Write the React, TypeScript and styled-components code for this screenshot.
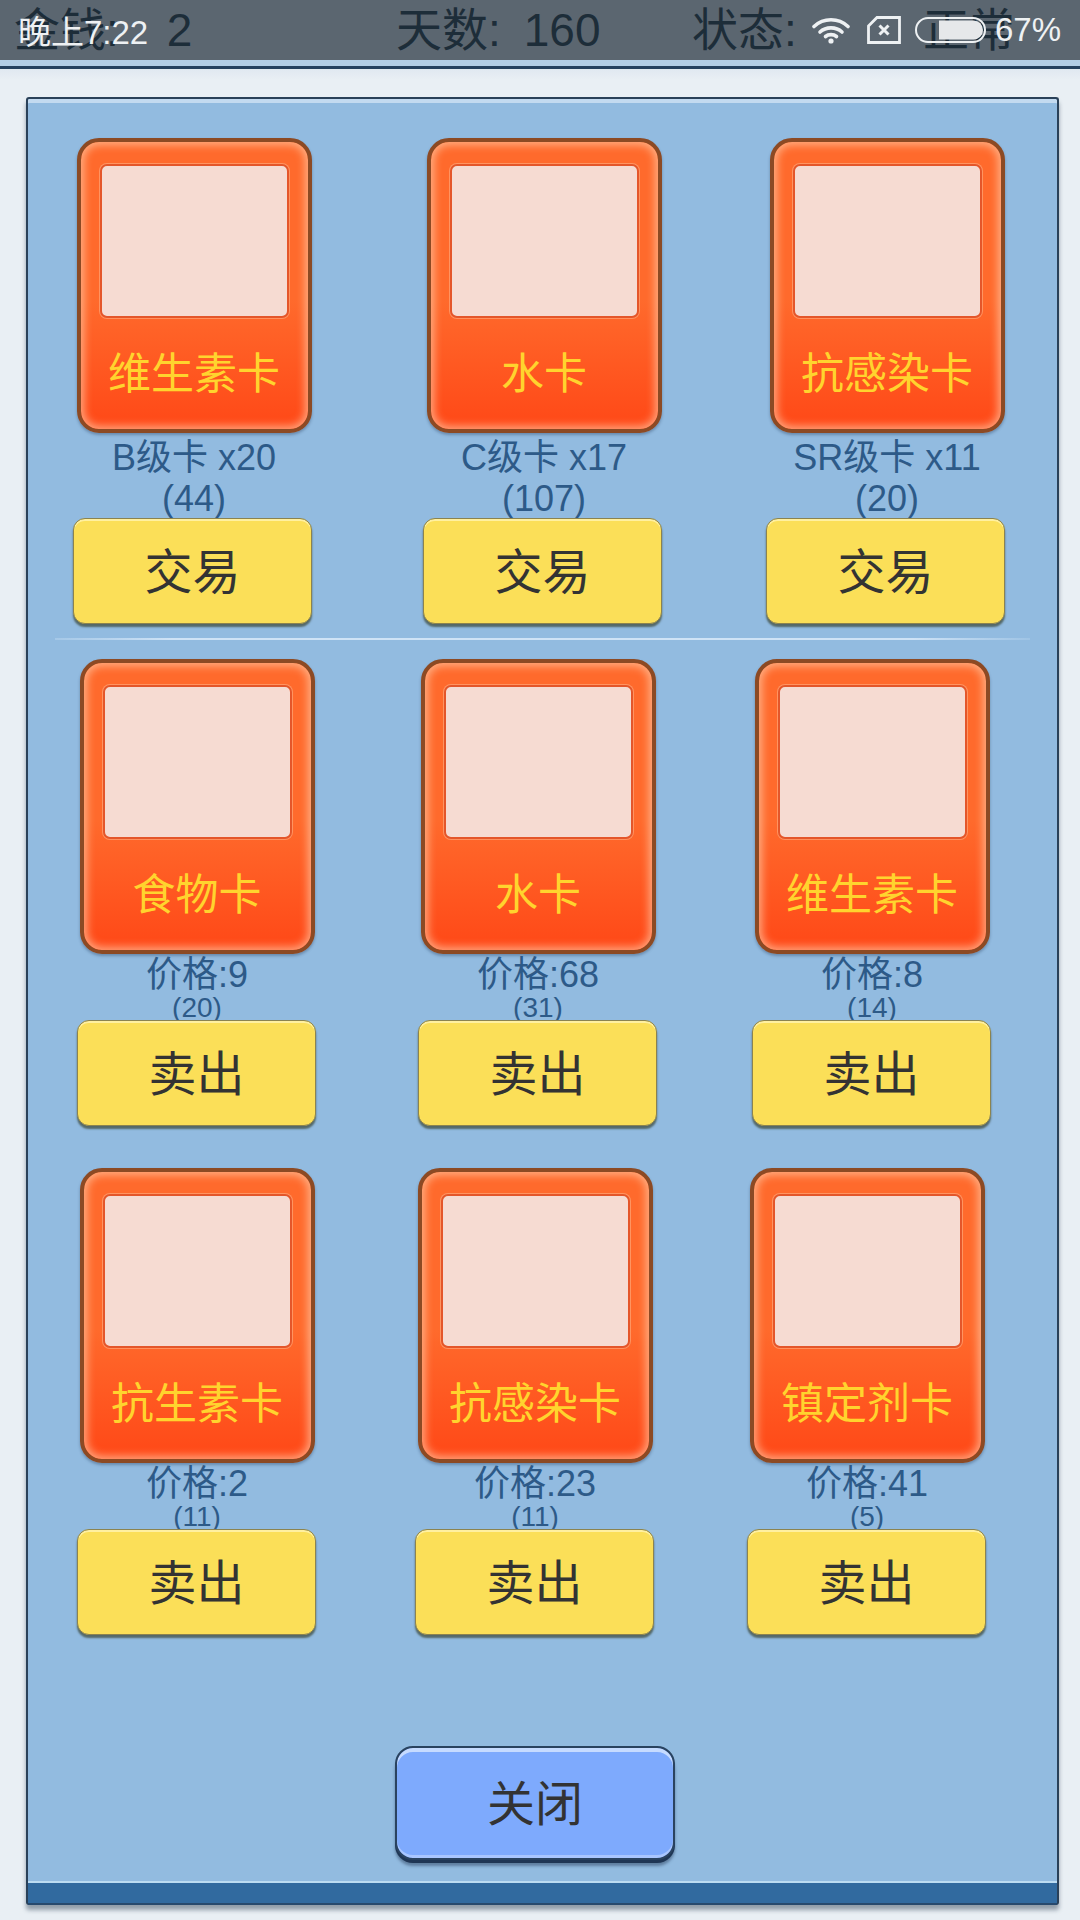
import styled, { createGlobalStyle } from "styled-components";

const GlobalStyle = createGlobalStyle`
    html, body {
        margin: 0;
        padding: 0;
        background: #e9eff4;
    }
    * {
        box-sizing: border-box;
    }
`;

const FONT = `"Liberation Sans", "Noto Sans CJK SC", sans-serif`;

const Page = styled.div`
    position: relative;
    width: 1080px;
    height: 1920px;
    overflow: hidden;
    font-family: ${FONT};
    background: #e9eff4;
`;

const Header = styled.header`
    height: 80px;
    background: linear-gradient(#a9c0dd, #e9eff4);
`;

const HeaderBar = styled.div`
    display: grid;
    grid-template-columns: 382px 296px 231px auto;
    align-items: center;
    height: 60px;
    padding-left: 14px;
    background: #5b6670;
    color: #1d2d39;
    font-size: 46px;
    line-height: 46px;
    white-space: nowrap;
    overflow: hidden;
`;

const HeaderValue = styled.span<{ $gap: number }>`
    margin-left: ${(props) => props.$gap}px;
`;

const HeaderEdge = styled.div`
    height: 9px;
    background: #b2cde6;
    border-bottom: 3px solid #24405f;
`;

const StatusBar = styled.div`
    position: absolute;
    top: 0;
    left: 18px;
    right: 19px;
    height: 60px;
    display: flex;
    align-items: center;
    color: #eef1f3;
    font-size: 33px;
`;

const StatusTime = styled.span`
    margin-right: auto;
`;

const StatusIcon = styled.svg`
    display: block;
    margin-right: ${(props: { $gap: number }) => props.$gap}px;
`;

const Panel = styled.main`
    display: flex;
    flex-direction: column;
    height: 1808px;
    margin: 17px 21px 0 26px;
    border: 2px solid #2a4159;
    border-bottom: none;
    border-radius: 3px;
    background: #92bbe0;
    box-shadow: inset 0 4px 0 #c3daf0, 0 5px 4px rgba(40, 60, 80, 0.45);
`;

const Body = styled.div`
    flex: 1;
    padding-top: 39px;
`;

const Row = styled.div<{ $left: number; $cols: string }>`
    display: grid;
    grid-template-columns: ${(props) => props.$cols};
    padding-left: ${(props) => props.$left}px;
`;

const Slot = styled.div`
    display: flex;
    flex-direction: column;
    width: 239px;
`;

const CardColumn = styled.div<{ $inset: number }>`
    display: flex;
    flex-direction: column;
    align-items: center;
    padding-left: ${(props) => props.$inset}px;
`;

const Card = styled.div`
    width: 235px;
    height: 295px;
    padding: 22px 19px 0;
    border: 4px solid #8c4a24;
    border-radius: 22px;
    background: linear-gradient(#ff6a2c 0%, #ff6a2c 55%, #ff4817 100%);
    box-shadow: inset 0 0 8px 3px rgba(255, 205, 170, 0.7), 0 2px 3px rgba(30, 50, 80, 0.35);
`;

const CardArt = styled.div`
    height: 154px;
    border: 2px solid #e4562a;
    border-radius: 7px;
    background: #f6dbd2;
    box-shadow: 0 0 0 1px rgba(255, 190, 150, 0.5);
`;

const CardName = styled.div`
    margin: 31px -10px 0;
    text-align: center;
    color: #ffd42e;
    font-size: 43px;
    line-height: 50px;
    white-space: nowrap;
`;

const Caption = styled.div`
    width: 100%;
    margin-top: 4px;
    height: 81px;
    text-align: center;
    color: #2d5a88;
    font-size: 36px;
    line-height: 41px;
    white-space: nowrap;
`;

const Price = styled.div`
    margin-top: 2px;
    text-align: center;
    color: #2d5a88;
    font-size: 36px;
    line-height: 38px;
    white-space: nowrap;
`;

const Stock = styled.div`
    text-align: center;
    color: #2d5a88;
    font-size: 28px;
    line-height: 27px;
    height: 26px;
    overflow: hidden;
`;

const ActionButton = styled.button`
    display: block;
    width: 239px;
    height: 106px;
    padding: 0 0 6px;
    border: 1px solid #8b8350;
    border-radius: 12px;
    background: #fbdf58;
    box-shadow: inset 0 2px 0 #fff0a0, 0 3px 2px rgba(50, 60, 40, 0.65);
    color: #333;
    font-family: ${FONT};
    font-size: 48px;
`;

const Divider = styled.div`
    height: 2px;
    margin: 14px 27px 19px 27px;
    background: linear-gradient(90deg, rgba(210, 230, 248, 0.3), #cfe3f6 12%, #cfe3f6 88%, rgba(210, 230, 248, 0.2));
`;

const RowSpacer = styled.div`
    height: 42px;
`;

const CloseRow = styled.div`
    display: flex;
    padding-left: 367px;
    margin-bottom: 21px;
`;

const CloseButton = styled.button`
    width: 280px;
    height: 114px;
    padding: 0 0 6px;
    border: 2px solid #2a4360;
    border-radius: 18px;
    background: #7eaafd;
    box-shadow: inset 0 4px 0 #c6dbff, inset 0 -3px 0 #a9c6ff, 0 3px 0 #1f3655, 0 6px 3px rgba(30, 50, 80, 0.45);
    color: #333;
    font-family: ${FONT};
    font-size: 48px;
`;

const FooterStrip = styled.div`
    height: 24px;
    border-top: 2px solid #bcdcf2;
    background: #316a9f;
    border-bottom: 2px solid #27496d;
`;

const tradeCards = [
    { name: "维生素卡", grade: "B级卡 x20", count: 44 },
    { name: "水卡", grade: "C级卡 x17", count: 107 },
    { name: "抗感染卡", grade: "SR级卡 x11", count: 20 },
];

const sellRows = [
    {
        left: 49,
        cols: "341px 334px 239px",
        spacer: true,
        cards: [
            { name: "食物卡", price: 9, count: 20 },
            { name: "水卡", price: 68, count: 31 },
            { name: "维生素卡", price: 8, count: 14 },
        ],
    },
    {
        left: 49,
        cols: "338px 332px 239px",
        spacer: false,
        cards: [
            { name: "抗生素卡", price: 2, count: 11 },
            { name: "抗感染卡", price: 23, count: 11 },
            { name: "镇定剂卡", price: 41, count: 5 },
        ],
    },
];

function GameCard({ name }: { name: string }) {
    return (
        <Card>
            <CardArt />
            <CardName>{name}</CardName>
        </Card>
    );
}

function WifiIcon() {
    return (
        <StatusIcon $gap={17} width="38" height="28" viewBox="0 0 38 28" fill="none" stroke="#eef1f3" strokeWidth="3.6" strokeLinecap="round">
            <path d="M2 10.5C11.5 1.5 26.5 1.5 36 10.5" />
            <path d="M8 16C14 10.5 24 10.5 30 16" />
            <path d="M13.5 20.5C16.5 18 21.5 18 24.5 20.5" />
            <circle cx="19" cy="25" r="2.6" fill="#eef1f3" stroke="none" />
        </StatusIcon>
    );
}

function SimIcon() {
    return (
        <StatusIcon $gap={14} width="34" height="28" viewBox="0 0 34 28" fill="none" stroke="#eef1f3" strokeWidth="2.8">
            <path d="M1.5 10L10 1.5H32.5V26.5H1.5Z" />
            <path d="M12.5 9.5L21.5 18.5M21.5 9.5L12.5 18.5" strokeWidth="3" />
        </StatusIcon>
    );
}

function BatteryIcon() {
    return (
        <StatusIcon $gap={9} width="71" height="26" viewBox="0 0 71 26" fill="none">
            <rect x="1" y="1" width="69" height="24" rx="12" stroke="#eef1f3" strokeWidth="2" />
            <path d="M24 3.5H58.5A9.5 9.5 0 0 1 58.5 22.5H24Z" fill="#e6e8ea" />
        </StatusIcon>
    );
}

function App() {
    return (
        <Page>
            <GlobalStyle />
            <Header>
                <HeaderBar>
                    <span>
                        金钱:<HeaderValue $gap={48}>2</HeaderValue>
                    </span>
                    <span>
                        天数:<HeaderValue $gap={23}>160</HeaderValue>
                    </span>
                    <span>状态:</span>
                    <span>正常</span>
                </HeaderBar>
                <HeaderEdge />
            </Header>
            <StatusBar>
                <StatusTime>晚上7:22</StatusTime>
                <WifiIcon />
                <SimIcon />
                <BatteryIcon />
                <span>67%</span>
            </StatusBar>
            <Panel>
                <Body>
                    <Row $left={45} $cols="350px 343px 239px">
                        {tradeCards.map((card) => (
                            <Slot key={card.name}>
                                <CardColumn $inset={3}>
                                    <GameCard name={card.name} />
                                    <Caption>
                                        {card.grade}
                                        <br />({card.count})
                                    </Caption>
                                </CardColumn>
                                <ActionButton>交易</ActionButton>
                            </Slot>
                        ))}
                    </Row>
                    <Divider />
                    {sellRows.map((row) => (
                        <div key={row.cols}>
                            <Row $left={row.left} $cols={row.cols}>
                                {row.cards.map((card) => (
                                    <Slot key={card.name}>
                                        <CardColumn $inset={1}>
                                            <GameCard name={card.name} />
                                            <Price>价格:{card.price}</Price>
                                            <Stock>({card.count})</Stock>
                                        </CardColumn>
                                        <ActionButton>卖出</ActionButton>
                                    </Slot>
                                ))}
                            </Row>
                            {row.spacer && <RowSpacer />}
                        </div>
                    ))}
                </Body>
                <CloseRow>
                    <CloseButton>关闭</CloseButton>
                </CloseRow>
                <FooterStrip />
            </Panel>
        </Page>
    );
}

export default App;
